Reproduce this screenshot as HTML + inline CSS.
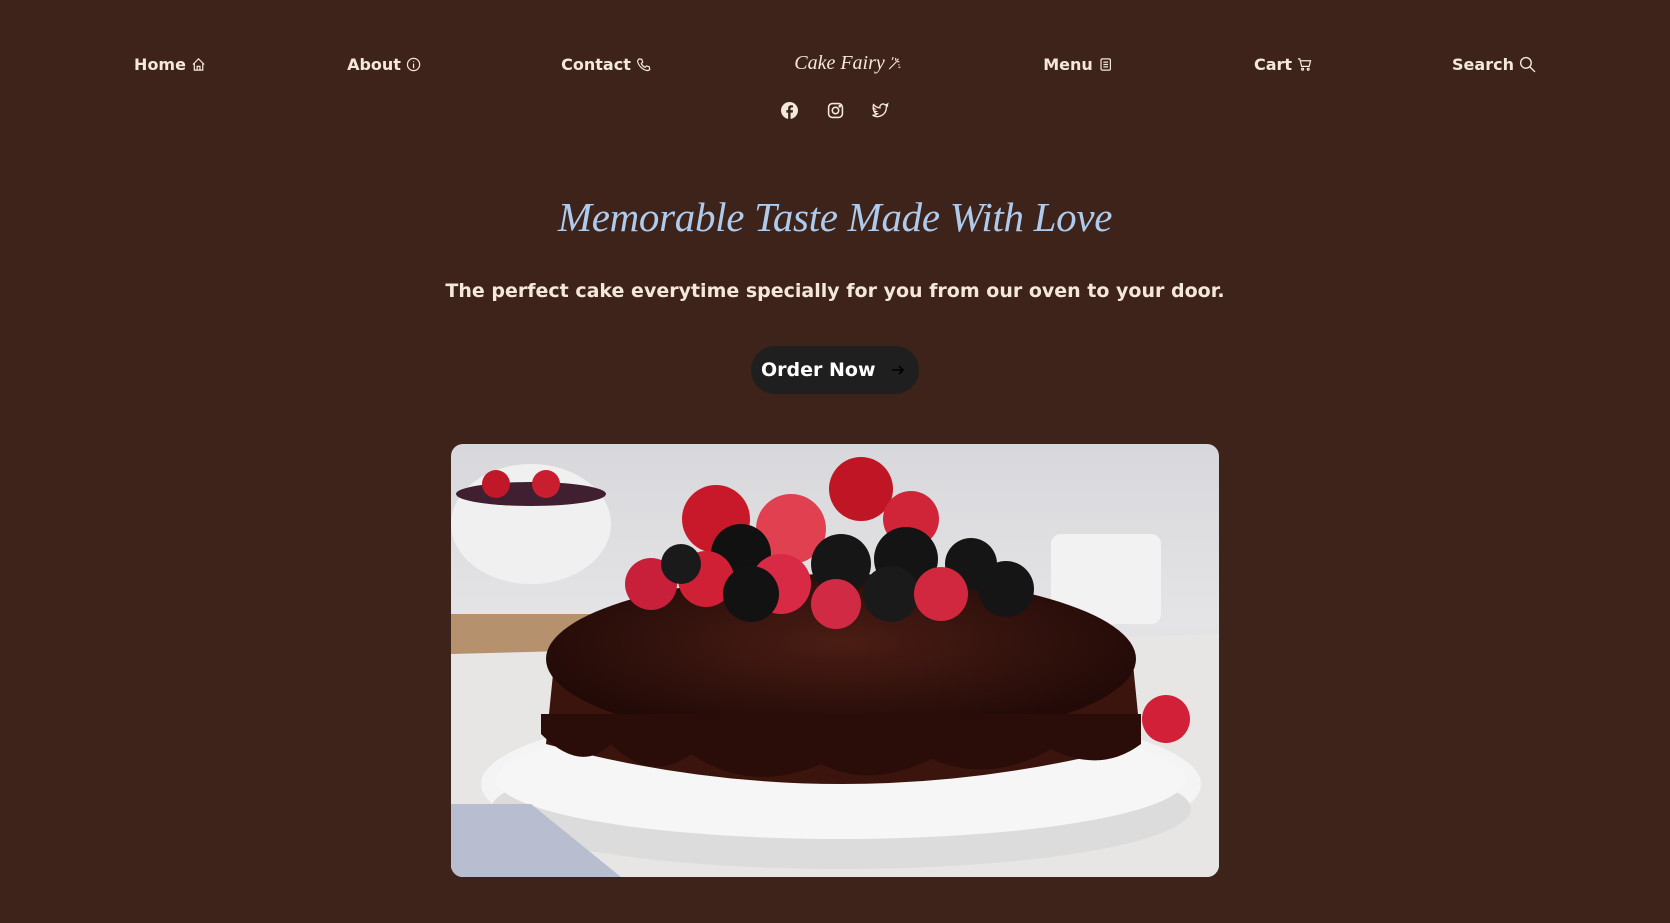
<!DOCTYPE html>
<html><head><meta charset="utf-8">
<style>
*{margin:0;padding:0;box-sizing:border-box}
html,body{width:1670px;height:923px;overflow:hidden;background:#3d2319;font-family:"DejaVu Sans","Liberation Sans",sans-serif;color:#f4e8da}
.nav{position:absolute;top:52px;font-weight:bold;font-size:16px;transform:translateX(-50%);white-space:nowrap;display:flex;align-items:center;gap:5px;height:24px}
.nav svg{width:15px;height:15px;stroke:#f4e8da;fill:none;stroke-width:1.3}
.logo{font-family:"Liberation Serif",serif;font-style:italic;font-weight:normal;font-size:20px;top:51px;gap:2px}
.soc{position:absolute;top:102px;width:17px;height:17px}
h1{position:absolute;top:193px;left:0;width:1670px;text-align:center;font-family:"Liberation Serif",serif;font-style:italic;font-weight:normal;font-size:41px;color:#aecbee;letter-spacing:-0.3px}
.sub{position:absolute;top:280px;left:0;width:1670px;text-align:center;font-weight:bold;font-size:19px}
.btn{position:absolute;left:751px;top:346px;width:168px;height:48px;border-radius:24px;background:#1f1f1f;color:#fff;font-weight:bold;font-size:19px;display:flex;align-items:center;padding-left:10px}
.img{position:absolute;left:451px;top:444px;width:768px;height:433px;border-radius:12px;overflow:hidden;background:linear-gradient(180deg,#d8d8dc 0%,#e4e4e6 40%,#d6d4d2 100%)}
</style></head><body>
<div class="nav" style="left:170px">Home <svg viewBox="0 0 16 16"><path d="M2 8 8 2l6 6M3.5 7v7h9V7M6.5 14v-4h3v4"/></svg></div>
<div class="nav" style="left:384px">About <svg viewBox="0 0 16 16"><circle cx="8" cy="8" r="6.5"/><path d="M8 7v5M8 4.5v1"/></svg></div>
<div class="nav" style="left:606px">Contact <svg viewBox="0 0 16 16"><path d="M3 2l3 .5 1 3-1.5 1.5a8 8 0 0 0 4 4L11 9.5l3 1 .5 3-2 1C7 14 2 9 1.5 4z"/></svg></div>
<div class="nav logo" style="left:848px">Cake Fairy <svg viewBox="0 0 16 16" style="stroke-width:1.2"><path d="M2 14 10 6M9 2v3M13 6h-3M12 3l-2 2M5 3l1 1M13 10l-1-1M14 12h-2M6 1v2"/></svg></div>
<div class="nav" style="left:1078px">Menu <svg viewBox="0 0 16 16"><rect x="3" y="2" width="10" height="12" rx="1.5"/><path d="M5.5 5.5h5M5.5 8h5M5.5 10.5h5"/></svg></div>
<div class="nav" style="left:1283px">Cart <svg viewBox="0 0 16 16"><path d="M1 2h2l2 8h8l1.5-6H4"/><circle cx="6" cy="13" r="1"/><circle cx="12" cy="13" r="1"/></svg></div>
<div class="nav" style="left:1494px">Search <svg viewBox="0 0 16 16" style="width:17px;height:17px"><circle cx="6.5" cy="6.5" r="5"/><path d="M10 10l5 5"/></svg></div>

<svg class="soc" style="left:781px" viewBox="0 0 16 16"><circle cx="8" cy="8" r="8" fill="#f4e8da"/><path d="M9 16V10h2l.3-2.3H9V6.3c0-.7.2-1.1 1.1-1.1h1.2v-2a16 16 0 0 0-1.8-.1C7.8 3.1 6.7 4.1 6.7 6v1.7H5V10h1.7v6z" fill="#3d2319"/></svg>
<svg class="soc" style="left:827px" viewBox="0 0 16 16" fill="none" stroke="#f4e8da" stroke-width="1.5"><rect x="1.5" y="1.5" width="13" height="13" rx="3.5"/><circle cx="8" cy="8" r="3"/><circle cx="12" cy="4" r=".5" fill="#f4e8da"/></svg>
<svg class="soc" style="left:872px" viewBox="0 0 16 16" fill="none" stroke="#f4e8da" stroke-width="1.3"><path d="M15 3.2a6 6 0 0 1-1.8.5 3 3 0 0 0 1.4-1.7 6 6 0 0 1-2 .8A3 3 0 0 0 7.5 5.5 8.5 8.5 0 0 1 1.5 2.4a3 3 0 0 0 .9 4 3 3 0 0 1-1.3-.4 3 3 0 0 0 2.4 3 3 3 0 0 1-1.4.1 3 3 0 0 0 2.8 2A6 6 0 0 1 .5 12.4 8.5 8.5 0 0 0 13.5 5v-.4A6 6 0 0 0 15 3.2z"/></svg>

<h1>Memorable Taste Made With Love</h1>
<div class="sub">The perfect cake everytime specially for you from our oven to your door.</div>
<div class="btn">Order Now <svg viewBox="0 0 16 16" width="16" height="16" style="margin-left:14px" fill="none" stroke="#000" stroke-width="1.6"><path d="M2 8h11M9 4l4 4-4 4"/></svg></div>

<div class="img">
  <svg width="768" height="433" viewBox="0 0 768 433">
    <defs>
      <radialGradient id="g" cx="50%" cy="40%" r="60%"><stop offset="0" stop-color="#4a1d14"/><stop offset="1" stop-color="#1e0806"/></radialGradient>
    </defs>
    <rect x="0" y="170" width="170" height="40" fill="#b5916e"/>
    <ellipse cx="80" cy="80" rx="80" ry="60" fill="#f0f0f0"/>
    <ellipse cx="80" cy="50" rx="75" ry="12" fill="#402030"/>
    <rect x="600" y="90" width="110" height="90" rx="10" fill="#f2f2f2"/>
    <path d="M0 210 L768 190 L768 433 L0 433z" fill="#e7e6e4"/>
    <ellipse cx="390" cy="340" rx="360" ry="80" fill="#f4f4f4"/>
    <ellipse cx="390" cy="365" rx="350" ry="60" fill="#dcdcdc"/>
    <ellipse cx="390" cy="335" rx="345" ry="60" fill="#f6f6f6"/>
    <path d="M105 200 Q390 110 680 200 L690 300 Q390 380 95 300z" fill="#3a140d"/>
    <ellipse cx="390" cy="215" rx="295" ry="85" fill="url(#g)"/>
    <path d="M90 290 Q130 330 160 300 Q200 340 240 310 Q300 350 370 320 Q420 345 480 315 Q540 340 600 305 Q650 330 690 300 L690 270 L90 270z" fill="#2a0c08"/>
    <g>
      <circle cx="265" cy="75" r="34" fill="#c8192a"/><circle cx="410" cy="45" r="32" fill="#c01525"/>
      <circle cx="460" cy="75" r="28" fill="#d02438"/><circle cx="340" cy="85" r="35" fill="#e04050"/>
      <circle cx="290" cy="110" r="30" fill="#111"/><circle cx="390" cy="120" r="30" fill="#161616"/>
      <circle cx="455" cy="115" r="32" fill="#141414"/><circle cx="520" cy="120" r="26" fill="#151515"/>
      <circle cx="200" cy="140" r="26" fill="#c8203a"/><circle cx="255" cy="135" r="28" fill="#d02035"/>
      <circle cx="330" cy="140" r="30" fill="#d92a45"/><circle cx="300" cy="150" r="28" fill="#121212"/>
      <circle cx="385" cy="160" r="25" fill="#d12a45"/><circle cx="440" cy="150" r="28" fill="#1a1a1a"/>
      <circle cx="490" cy="150" r="27" fill="#d12840"/><circle cx="555" cy="145" r="28" fill="#151515"/>
      <circle cx="230" cy="120" r="20" fill="#1a1a1a"/><circle cx="715" cy="275" r="24" fill="#d22038"/>
      <circle cx="45" cy="40" r="14" fill="#c01828"/><circle cx="95" cy="40" r="14" fill="#c81e30"/>
    </g>
    <path d="M0 360 L80 360 L170 433 L0 433z" fill="#b8bed0"/>
  </svg>
</div>
</body></html>
